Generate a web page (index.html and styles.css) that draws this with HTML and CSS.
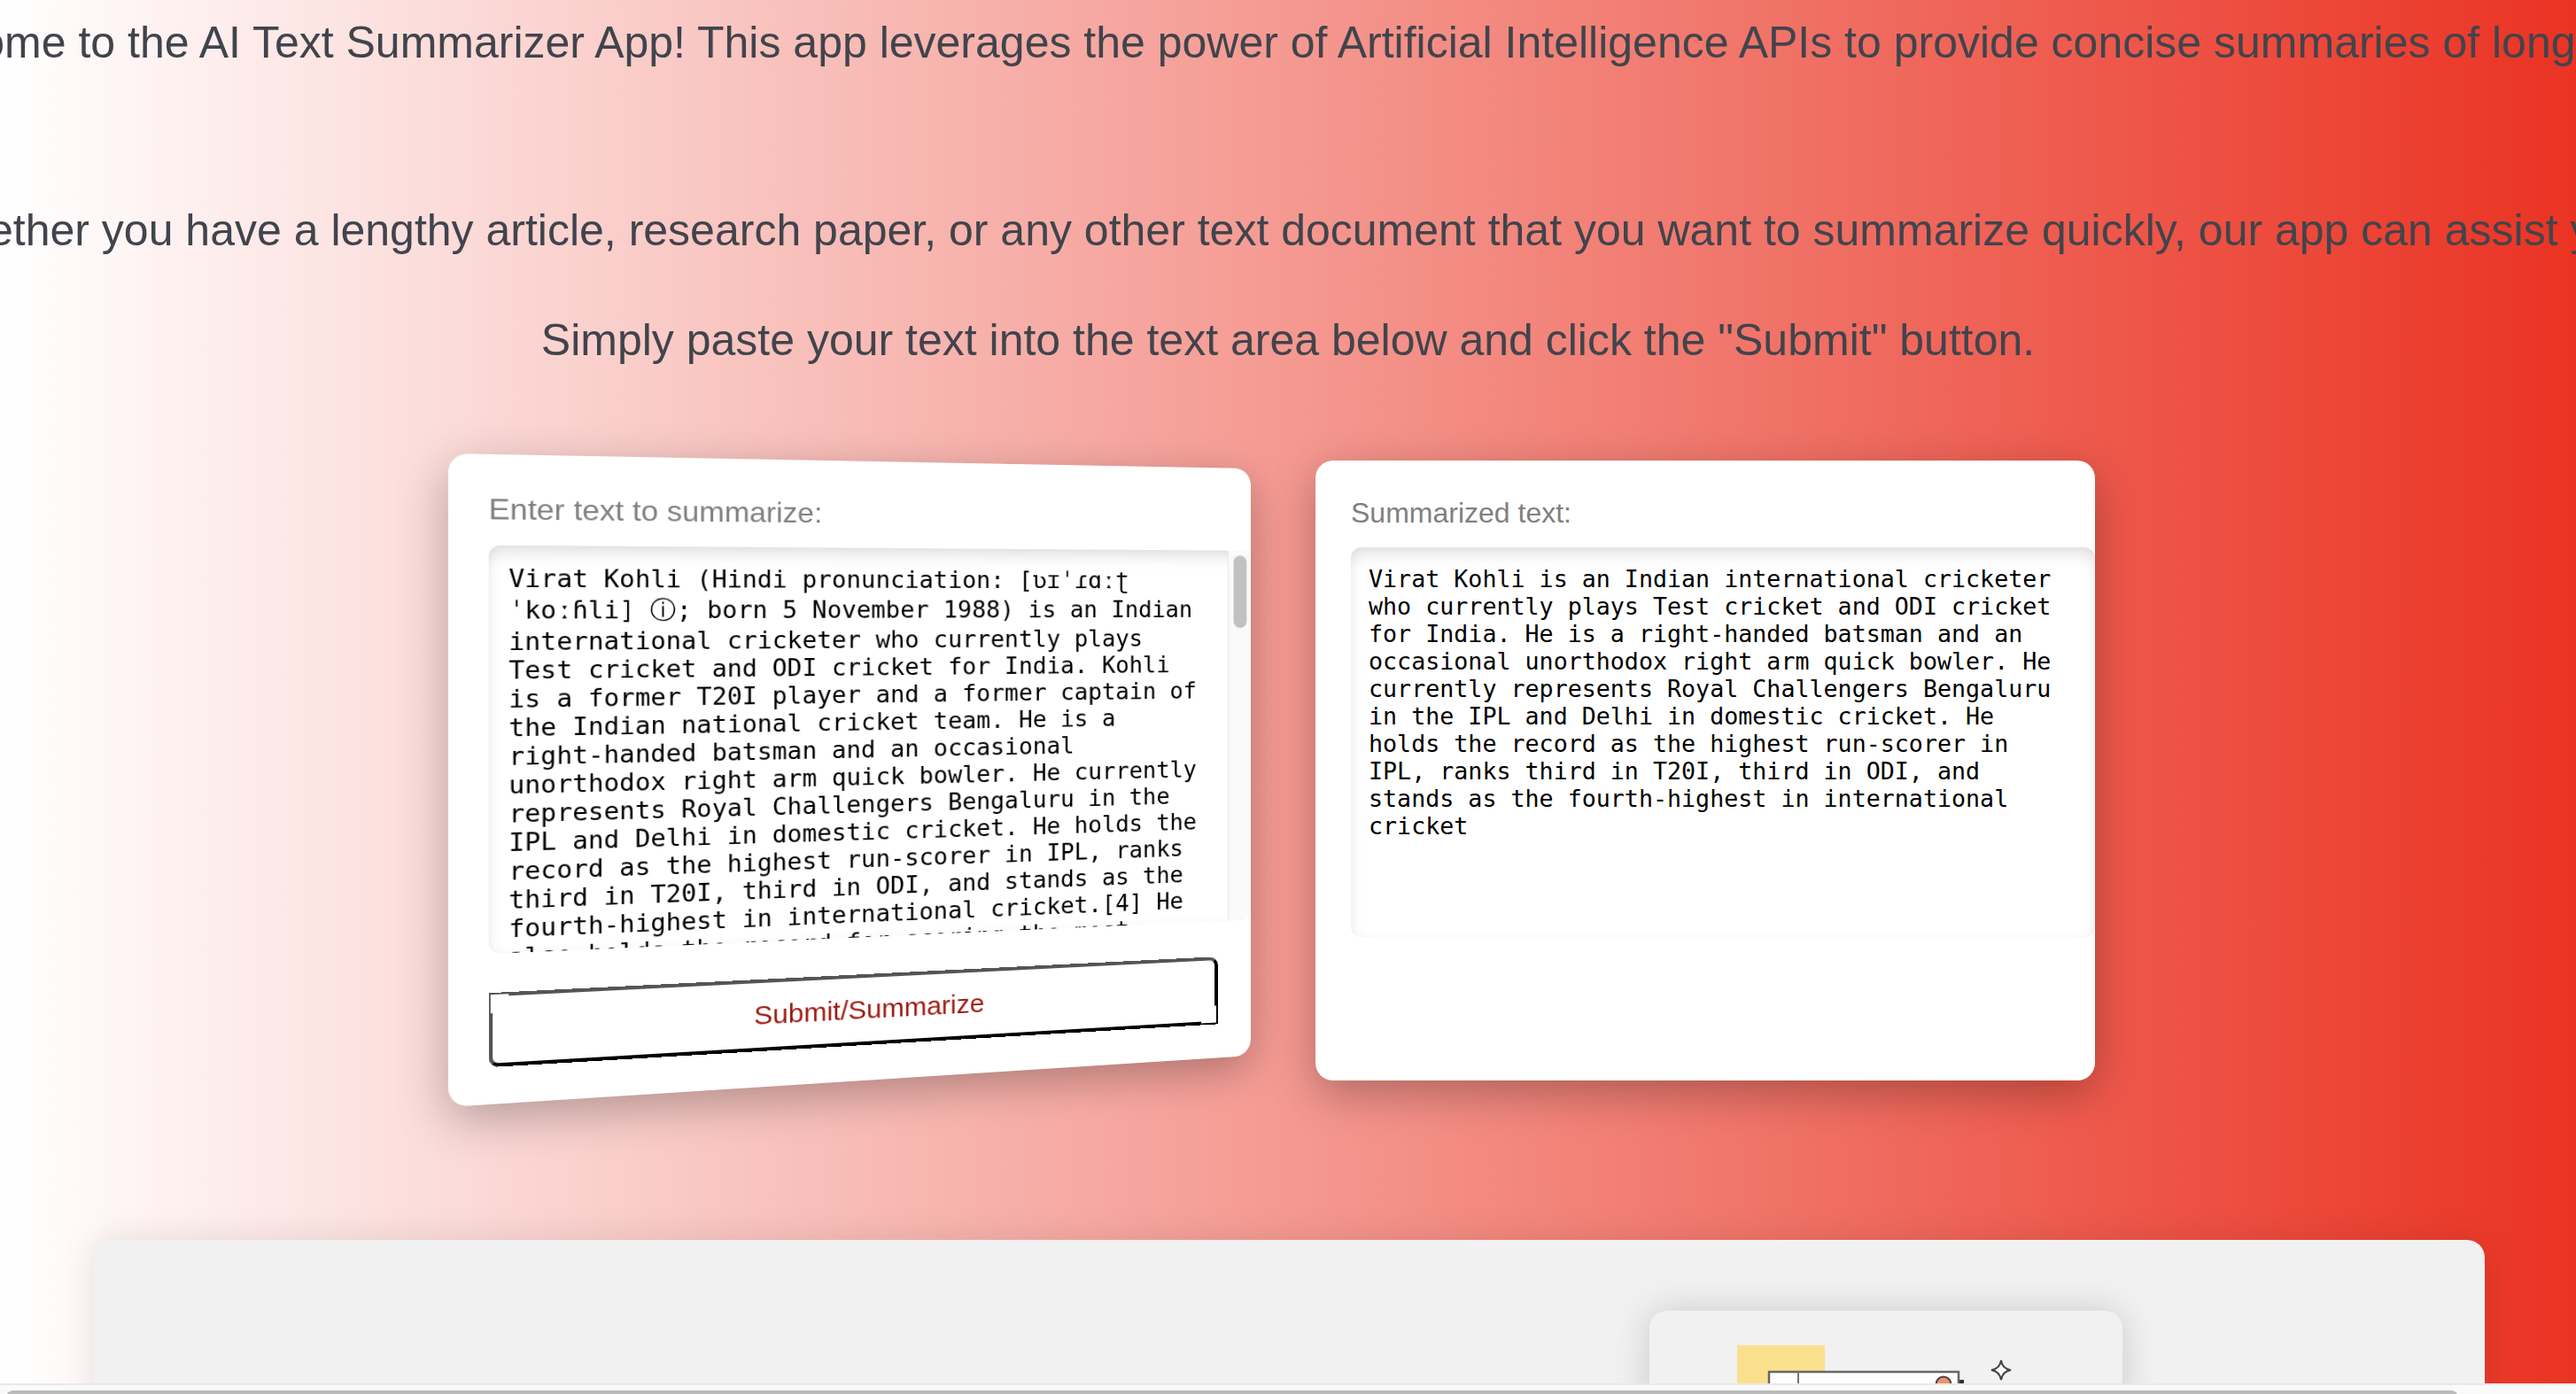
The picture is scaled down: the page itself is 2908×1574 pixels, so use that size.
FILE: index.html
```html
<!DOCTYPE html>
<html lang="en">
<head>
<meta charset="utf-8">
<title>AI Text Summarizer</title>
<link rel="stylesheet" href="styles.css">
</head>
<body>
<main class="page">
  <section class="intro">
    <p class="intro-line intro-first">Welcome to the AI Text Summarizer App! This app leverages the power of Artificial Intelligence APIs to provide concise summaries of long texts.</p>
    <p class="intro-line intro-second">Whether you have a lengthy article, research paper, or any other text document that you want to summarize quickly, our app can assist you.</p>
    <p class="intro-line intro-third">Simply paste your text into the text area below and click the "Submit" button.</p>
  </section>
  <section class="cards">
    <div class="card card-input">
      <label class="card-label">Enter text to summarize:</label>
      <div class="text-box text-box-input">
        <div class="text-body">Virat Kohli (Hindi pronunciation: <span class="ipa-line">[ʋɪˈɾɑːʈ</span> <span class="audio-line">ˈkoːɦli] ⓘ;</span> born 5 November 1988) is an Indian international cricketer who currently plays Test cricket and ODI cricket for India. Kohli is a former T20I player and a former captain of the Indian national cricket team. He is a right-handed batsman and an occasional unorthodox right arm quick bowler. He currently represents Royal Challengers Bengaluru in the IPL and Delhi in domestic cricket. He holds the record as the highest run-scorer in IPL, ranks third in T20I, third in ODI, and stands as the fourth-highest in international cricket.[4] He also holds the record for scoring the most centuries in One Day Internationals.</div>
        <div class="scroll-track"><div class="scroll-thumb"></div></div>
      </div>
      <button class="submit-btn" type="button">Submit/Summarize</button>
    </div>
    <div class="card card-output">
      <label class="card-label">Summarized text:</label>
      <div class="text-box"><div class="text-body">Virat Kohli is an Indian international cricketer who currently plays Test cricket and ODI cricket for India. He is a right-handed batsman and an occasional unorthodox right arm quick bowler. He currently represents Royal Challengers Bengaluru in the IPL and Delhi in domestic cricket. He holds the record as the highest run-scorer in IPL, ranks third in T20I, third in ODI, and stands as the fourth-highest in international cricket</div></div>
    </div>
  </section>
  <section class="panel">
    <div class="panel-card">
      <svg class="panel-art" width="320" height="64" viewBox="0 0 320 64" xmlns="http://www.w3.org/2000/svg">
        <rect x="0" y="0" width="99" height="64" fill="#fadf8d"/>
        <rect x="36" y="30" width="214" height="50" fill="#fff" stroke="#666" stroke-width="2.500"/>
        <line x1="69" y1="30" x2="69" y2="64" stroke="#777" stroke-width="2"/>
        <circle cx="233" cy="44" r="8.500" fill="#f0906c" stroke="#444" stroke-width="2"/>
        <rect x="251" y="39" width="5" height="25" fill="#333"/>
        <path d="M298 17 Q299.500 26.500 309 28 Q299.500 29.500 298 39 Q296.500 29.500 287 28 Q296.500 26.500 298 17 Z" fill="#fff" stroke="#444" stroke-width="2"/>
      </svg>
    </div>
  </section>
</main>
<div class="h-scroll"><div class="h-thumb"></div></div>
</body>
</html>
```
FILE: styles.css
```css
* { box-sizing: border-box; }
html, body { margin: 0; height: 100%; overflow: hidden; }
body { font-family: "Liberation Sans", Arial, sans-serif; }
.page {
  height: 1574px;
  overflow: hidden;
  background: linear-gradient(90deg, #fff 0%, #ea3323 100%);
  display: flex;
  flex-direction: column;
}
.intro { display: flex; flex-direction: column; align-items: center; }
.intro-line {
  margin: 0;
  white-space: nowrap;
  font-size: 50px;
  line-height: 60px;
  color: #41444c;
}
.intro-first { margin-top: 18px; }
.intro-second { margin-top: 152px; }
.intro-third { margin-top: 64px; }

.cards { display: flex; gap: 86px; margin: 106px 0 0 519px; align-items: flex-start; flex: none; }
.card {
  width: 880px;
  height: 700px;
  padding-left: 40px;
  padding-top: 39px;
  background: #fff;
  border-radius: 20px;
  box-shadow: 0 15px 50px rgba(0, 0, 0, .28);
  flex: none;
}
.card-input {
  transform-origin: 0 0;
  transform: matrix3d(1.144339, .020475, 0, .00012855, 0, 1.054286, 0, 0, 0, 0, 1, 0, -13, -8, 0, 1);
}
.card-label { display: block; font-size: 32px; line-height: 40px; color: #808080; }
.text-box {
  position: relative;
  width: 840px;
  height: 440px;
  margin-top: 19px;
  overflow: hidden;
  background: #fff;
  border-radius: 12px;
  box-shadow: inset 0 12px 20px -6px rgba(0, 0, 0, .13), inset 0 0 12px rgba(0, 0, 0, .04);
}
.text-box-input .text-body { padding-top: 19px; padding-right: 50px; }
.ipa-line { line-height: 33px; }
.audio-line { line-height: 36px; }
.text-body {
  padding: 20px 20px 0;
  font-family: "DejaVu Sans Mono", monospace;
  font-size: 26.67px;
  line-height: 31px;
  color: #000;
}
.scroll-track {
  position: absolute;
  top: 0;
  right: 0;
  width: 28px;
  height: 100%;
  background: #fafafa;
  border-left: 1px solid #e8e8e8;
}
.scroll-thumb {
  width: 16px;
  height: 86px;
  margin: 6px 0 0 6px;
  border-radius: 8px;
  background: #c1c1c1;
}
.submit-btn {
  position: relative;
  display: block;
  width: 800px;
  height: 80px;
  margin-top: 42px;
  background: #fff;
  border: 4px solid #555;
  border-right-color: #000;
  border-bottom-color: #000;
  border-radius: 0 10px 0 10px;
  font-family: "Liberation Sans", Arial, sans-serif;
  font-size: 30px;
  color: #9c1c14;
}
.submit-btn::before, .submit-btn::after {
  content: "";
  position: absolute;
  width: 18px;
  height: 20px;
  background: #fff;
}
.submit-btn::before { top: -2px; left: -2px; }
.submit-btn::after { bottom: -2px; right: -2px; }

.panel {
  display: flex;
  justify-content: flex-end;
  align-items: flex-start;
  height: 400px;
  flex: none;
  width: 2699px;
  margin: 180px 0 0 106px;
  padding: 80px 409px 0 0;
  background: #f1f1f1;
  border-radius: 20px;
  box-shadow: 0 0 40px rgba(0, 0, 0, .1);
}
.panel-card {
  width: 534px;
  height: 300px;
  padding: 39px 0 0 99px;
  background: #f1f1f1;
  border-radius: 20px;
  box-shadow: 0 0 40px rgba(0, 0, 0, .16);
}
.panel-art { display: block; overflow: visible; }

.h-scroll {
  position: fixed;
  left: 0;
  right: 0;
  bottom: 0;
  height: 12px;
  background: #fafafa;
  border-top: 2px solid #e8e8e8;
}
.h-thumb {
  position: absolute;
  left: 7px;
  top: 6px;
  width: 2768px;
  height: 16px;
  background: #bbb;
  border-radius: 8px;
}
```
